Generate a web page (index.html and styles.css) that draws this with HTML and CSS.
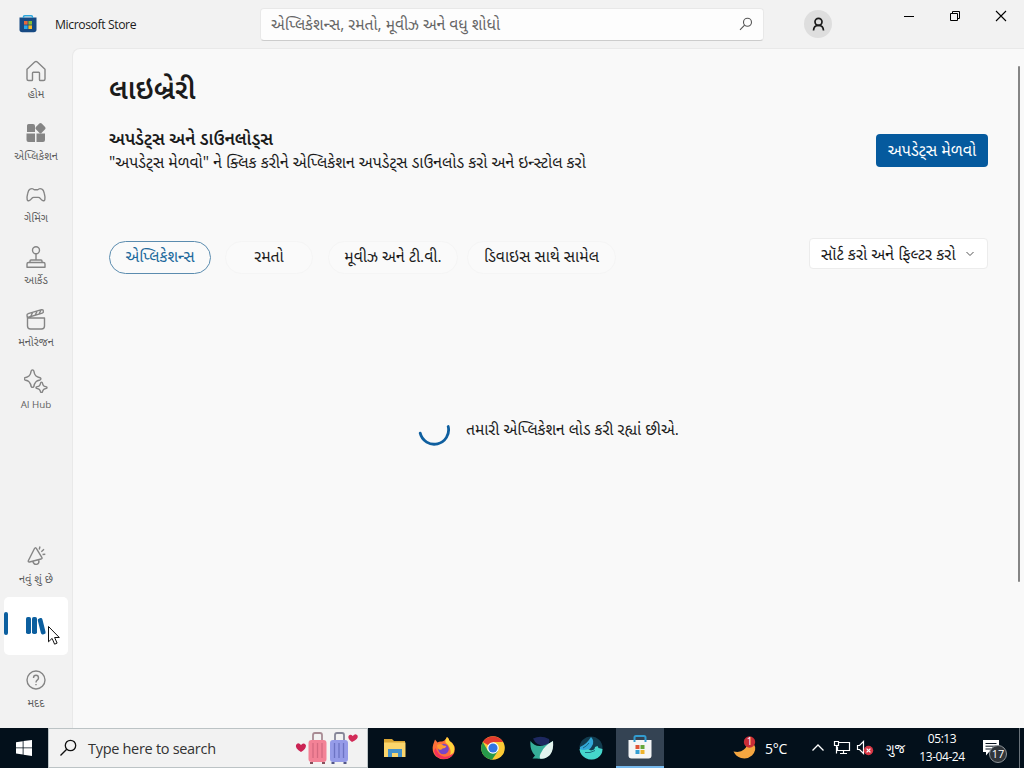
FILE: index.html
```
<!DOCTYPE html>
<html lang="gu">
<head>
    <meta charset="UTF-8">
    <meta name="viewport" content="width=device-width, initial-scale=1.0">
    <title>Microsoft Store</title>
    <link rel="stylesheet" href="styles.css">
</head>
<body>
    <header class="titlebar">
        <div class="brand">
            <svg width="18" height="18" viewBox="0 0 18 18">
                <path d="M.5 2.500h17v12q0 2.700-2.700 2.700H3.200q-2.700 0-2.700-2.700z" fill="#174a83"/>
                <path d="M4.500 3V2q0-1.200 1.200-1.200h6.600q1.200 0 1.200 1.200v1" fill="none" stroke="#2aa5dc" stroke-width="1.400"/>
                <path d="M5 6h3.600v3.600H5z" fill="#e66a3c"/>
                <path d="M9.400 6H13v3.600H9.400z" fill="#83bd35"/>
                <path d="M5 10.400h3.600V14H5z" fill="#28a8ea"/>
                <path d="M9.400 10.400H13V14H9.400z" fill="#f5bd28"/>
            </svg>
            <span>Microsoft Store</span>
        </div>
        <div class="search">
            <span>એપ્લિકેશન્સ, રમતો, મૂવીઝ અને વધુ શોધો</span>
            <svg width="14" height="14" viewBox="0 0 14 14" fill="none" stroke="#555" stroke-width="1.1">
                <circle cx="8.500" cy="5.300" r="4"/>
                <path d="M5.600 8.200L1 12.800"/>
            </svg>
        </div>
        <div class="avatar">
            <svg width="14" height="14" viewBox="0 0 14 14" fill="none" stroke="#1a1a1a" stroke-width="1.700">
                <circle cx="7.500" cy="4.800" r="3.500"/>
                <path d="M2.500 13.500q.2-5.200 5-5.200t5 5.200"/>
            </svg>
        </div>
        <div class="window-buttons">
            <svg width="12" height="12" viewBox="0 0 12 12"><path d="M1 6.500h10" stroke="#000"/></svg>
            <svg width="12" height="12" viewBox="0 0 12 12" fill="none" stroke="#000"><path d="M1.500 3.500h7v7h-7zM3.500 3.500v-2h7v7h-2"/></svg>
            <svg width="12" height="12" viewBox="0 0 12 12"><path d="M1 1l10 10M11 1L1 11" stroke="#000" stroke-width="1.100"/></svg>
        </div>
    </header>

    <div class="app">
        <nav class="sidebar">
            <a class="nav-item">
                <svg width="22" height="22" viewBox="0 0 22 22"><path d="M2 9.200L9.700 2q1.300-1.100 2.600 0L20 9.200V19q0 1.500-1.500 1.500h-3.200q-.8 0-.8-.8V13q0-.8-.8-.8H8.300q-.8 0-.8.8v6.700q0 .8-.8.8H3.500Q2 20.500 2 19z"/></svg>
                <span>હોમ</span>
            </a>
            <a class="nav-item">
                <svg class="solid" width="22" height="22" viewBox="0 0 22 22"><path d="M3.500 2H8q2 0 2 2v6H2V3.500Q2 2 3.500 2zM1.500 11.500H10V20H3.500q-2 0-2-2zM11.500 11.500H20V18q0 2-2 2h-6.500zM14.300 1.500q1.200-1 2.400 0l3.400 3.400q1 1.200 0 2.400l-3.400 3.400q-1.200 1-2.400 0l-3.400-3.400q-1-1.200 0-2.400z"/></svg>
                <span>એપ્લિકેશન</span>
            </a>
            <a class="nav-item">
                <svg width="22" height="22" viewBox="0 0 22 22"><path d="M5 5.200Q7 4.200 8.200 5q.5.800 1.200.8h3.200q.7 0 1.200-.8 1.200-.8 3.200.2 1.500.7 2.300 4.200 1.200 4.500.5 6.400-.4 1.200-1.600 1-1.500-.3-3-2.400-.7-1-2-1H8.800q-1.300 0-2 1-1.500 2.100-3 2.400-1.200.2-1.600-1-.7-1.900.5-6.400Q3.500 5.900 5 5.200z"/></svg>
                <span>ગેમિંગ</span>
            </a>
            <a class="nav-item">
                <svg width="22" height="22" viewBox="0 0 22 22"><circle cx="11" cy="4.200" r="3.500"/><path d="M11 7.700v6.800M5 16.500V15q0-1 1-1h10q1 0 1 1v1.500M3.500 16.500h15q1.500 0 1.500 1.500v3.300H2V18q0-1.500 1.500-1.500z"/></svg>
                <span>આર્કેડ</span>
            </a>
            <a class="nav-item">
                <svg width="22" height="22" viewBox="0 0 22 22"><path d="M2.500 10h17v8q0 3-3 3h-11q-3 0-3-3zM2.500 10L2 7.500q-.3-1.500 1.200-1.900L16.500 1.700q1.500-.3 1.800 1.200.4 1.800-1 2.200L2.500 9.500M7.500 4.700L5.500 8.800M12 3.400l-2 4.100M16 2l-2 4.100"/></svg>
                <span>મનોરંજન</span>
            </a>
            <a class="nav-item">
                <svg class="spark" width="24" height="24" viewBox="0 0 24 24"><path d="M7.200 1.800q1.300-1.800 2.600 0 .6 3.600 2 5 1.300 1.200 4.200 1.900 1.800 1 0 2.300-3 .6-4.200 1.900-1.400 1.400-2 4.600-1.300 1.800-2.600 0-.6-3.200-2-4.600Q4 11.600 1 11-.8 9.700 1 8.700q2.900-.7 4.200-1.900 1.400-1.400 2-5zM16.700 13.700q.8-1.200 1.600 0 .5 2.300 1.300 3.100.8.700 2.800 1.100 1.200.7 0 1.500-2 .4-2.800 1.200-.8.800-1.300 2.600-.8 1.200-1.600 0-.5-1.800-1.300-2.600-.8-.8-2.800-1.200-1.200-.8 0-1.500 2-.4 2.800-1.100.8-.8 1.300-3.100z"/></svg>
                <span class="latin">AI Hub</span>
            </a>
            <a class="nav-item nav-bottom">
                <svg width="22" height="22" viewBox="0 0 22 22"><path d="M9.500 3.500q.8-1.300 1.800-.1l5.500 9q.8 1.400-.8 1.600L4.500 17q-1.500.3-1.200-1.200zM8 16.800q.8 3 3.700 2.500 2.600-.7 2.200-3.800M14.200 4.500l.8-3M16.300 6.700l2.700-2.400M17.500 9.500l2.800-.3"/></svg>
                <span>નવું શું છે</span>
            </a>
            <a class="nav-item active">
                <svg width="24" height="24" viewBox="0 0 24 24"><rect x="2" y="3" width="5" height="17" rx="1.800"/><rect x="8" y="3" width="5" height="17" rx="1.800"/><rect x="15.300" y="4" width="4.800" height="16.500" rx="1.800" transform="rotate(-14 17.700 12.300)"/></svg>
            </a>
            <a class="nav-item">
                <svg width="22" height="22" viewBox="0 0 22 22"><circle cx="11" cy="11" r="9"/><path d="M8.500 9q0-2.700 2.500-2.700T13.500 9q0 1.200-1.300 2.200-1.200.8-1.200 2.200M11 15v1.300"/></svg>
                <span>મદદ</span>
            </a>
        </nav>

        <main class="content">
            <h1>લાઇબ્રેરી</h1>
            <section class="updates">
                <div>
                    <h2>અપડેટ્સ અને ડાઉનલોડ્સ</h2>
                    <p>"અપડેટ્સ મેળવો" ને ક્લિક કરીને એપ્લિકેશન અપડેટ્સ ડાઉનલોડ કરો અને ઇન્સ્ટોલ કરો</p>
                </div>
                <button class="primary">અપડેટ્સ મેળવો</button>
            </section>
            <section class="filters">
                <div class="chips">
                    <button class="chip chip-apps selected">એપ્લિકેશન્સ</button>
                    <button class="chip chip-games">રમતો</button>
                    <button class="chip chip-movies">મૂવીઝ અને ટી.વી.</button>
                    <button class="chip chip-device">ડિવાઇસ સાથે સામેલ</button>
                </div>
                <button class="sort">
                    <span>સૉર્ટ કરો અને ફિલ્ટર કરો</span>
                    <svg width="10" height="10" viewBox="0 0 10 10" fill="none" stroke="#555"><path d="M1.500 3L5 6.500 8.500 3"/></svg>
                </button>
            </section>
            <div class="loading">
                <svg width="34" height="34" viewBox="0 0 34 34" fill="none" stroke="#0f5f9f" stroke-width="2.800" stroke-linecap="round"><path d="M3.200 20.200A14.200 14.200 0 0 0 31.200 13.500"/></svg>
                <span>તમારી એપ્લિકેશન લોડ કરી રહ્યાં છીએ.</span>
            </div>
            <div class="scrollbar"></div>
        </main>
        <svg class="cursor" width="14" height="21" viewBox="0 0 14 21"><path d="M1.500 1.500v15.300l3.600-3.400 2.500 5.800 2.500-1.100-2.500-5.600h4.700z" fill="#fff" stroke="#111"/></svg>
    </div>

    <footer class="taskbar">
        <div class="start">
            <svg width="18" height="18" viewBox="0 0 18 18" fill="#fff"><path d="M1 3.200l6.700-1v6.300H1zM8.500 2.100L17 1v7.500H8.500zM1 9.300h6.700v6.300l-6.700-1zM8.500 9.300H17V17l-8.500-1.200z"/></svg>
        </div>
        <div class="task-search">
            <svg width="18" height="18" viewBox="0 0 18 18" fill="none" stroke="#111" stroke-width="1.300"><circle cx="10.500" cy="6.500" r="5.200"/><path d="M6.700 10.300L.5 16.500"/></svg>
            <span>Type here to search</span>
            <svg class="luggage" width="66" height="36" viewBox="0 0 66 36">
                <path d="M7 22q-6-3.500-5-7 2-3.500 5 0 3.500-3 5 .5 0 3.500-5 6.500z" fill="#cb2454"/>
                <path d="M19 11V5q0-2 2-2h5q2 0 2 2v6" fill="none" stroke="#a88b93" stroke-width="1.800"/>
                <rect x="14.500" y="10" width="18" height="22" rx="3" fill="#f38296"/>
                <path d="M19 13v15M23.500 13v15M28 13v15" stroke="#d46a80" stroke-width="1.300"/>
                <path d="M16 32h3v2h-3zM28 32h3v2h-3z" fill="#87505c"/>
                <path d="M41 11V5q0-2 2-2h5q2 0 2 2v6" fill="none" stroke="#858698" stroke-width="1.800"/>
                <rect x="36" y="10" width="18" height="22" rx="3" fill="#959be8"/>
                <path d="M40.500 13v15M45 13v15M49.500 13v15" stroke="#6d74c4" stroke-width="1.300"/>
                <path d="M37.500 32h3v2h-3zM49.500 32h3v2h-3z" fill="#535687"/>
                <path d="M58 12q-4.500-3-3.500-6 2-2.500 4.200 0 3-3.500 5-.3.800 3.300-5.700 6.300z" fill="#d22b58"/>
            </svg>
        </div>
        <div class="pinned">
            <div class="task-app">
                <svg width="24" height="24" viewBox="0 0 24 24"><path d="M1 3h8l2 2h11v16H1z" fill="#d9a534"/><path d="M1 6.500h21.500V21H1z" fill="#fbd56b"/><path d="M5 13h14v8h-4v-4H9v4H5z" fill="#4591c9"/></svg>
            </div>
            <div class="task-app">
                <svg width="24" height="24" viewBox="0 0 24 24"><path d="M15 1q2 1.500 2.500 4 3 1.200 5 5.500 1.500 8-5.200 11.500Q10 25.300 4 20.500-.7 16 1.200 8.500L3 3.500l2.500 3q2-1.500 4.500-1Q13 5 15 1z" fill="#ff7139"/><path d="M15 1q2 1.500 2.500 4 5 3 4.800 8.500-.5 5-4.800 7.500 2-4 .5-8.500-1-3.500-4.500-6Q13 3.500 15 1z" fill="#ffd43b"/><path d="M2 15q2 8 10 8 7 0 9.500-6-5 4.500-10 3.500T3.500 12z" fill="#f5315c"/><circle cx="11.500" cy="13" r="5.300" fill="#7a45c7"/><path d="M5 9q4-2 6.500.5l3 .5q-1 2.500-4 2.500-1.500 2-3.700.7Q5 12 5 9z" fill="#ff9a32"/></svg>
            </div>
            <div class="task-app">
                <svg width="24" height="24" viewBox="0 0 24 24"><circle cx="12" cy="12" r="11.800" fill="#fcc934"/><path d="M12 12L1.800 6A11.800 11.800 0 0 1 22.200 6H12z" fill="#e33b2e"/><path d="M1.800 6A11.800 11.800 0 0 0 11 23.800L17 15 12 12 7 15z" fill="#27994a"/><circle cx="12" cy="12" r="5.800" fill="#fff"/><circle cx="12" cy="12" r="4.600" fill="#3275e4"/></svg>
            </div>
            <div class="task-app">
                <svg width="24" height="24" viewBox="0 0 24 24"><path d="M3 2.500Q11-1 19 3q1.500 4-3 7Q6 10 3 2.500z" fill="#1d2860"/><path d="M.5 5q3.500 5 9 5 6 0 13.500-5 .5 9-4 14-5 5-12 3.500H2.500L5 19.500Q-.5 14 .5 5z" fill="#36ad98"/><path d="M23 5q1 9-3 14-4.500 4.500-10 3.500-1-3 1.500-6.500Q14 10 23 5z" fill="#e4f4ef"/></svg>
            </div>
            <div class="task-app">
                <svg width="24" height="24" viewBox="0 0 24 24"><circle cx="12" cy="12" r="11.500" fill="#123c4f"/><path d="M1 11Q8 8 12 1q4 4 1 9-2 4-5 4l-3 1-4-1z" fill="#32a8d8"/><path d="M.5 13q4.500 2 8.500 0l3 1.500q4-.5 4-3.500l2.500-1 1 2 4 1q0 6-5 9-6 3-12 0Q1 19 .5 13z" fill="#45d6cc"/><path d="M4 12q4-2 6-5M6 16.500q5 1 10-2" fill="none" stroke="#10546b" stroke-width=".8"/></svg>
            </div>
            <div class="task-app open">
                <svg width="24" height="24" viewBox="0 0 24 24"><path d="M.5 5h23v15.500q0 3-3 3h-17q-3 0-3-3z" fill="#f4f5f6"/><path d="M6.500 7V2.500Q6.500 1 8 1h8q1.500 0 1.500 1.500V7" fill="none" stroke="#329ccf" stroke-width="2"/><path d="M7.500 10h4v4h-4z" fill="#df5336"/><path d="M12.500 10h4v4h-4z" fill="#65a63a"/><path d="M7.500 15h4v4h-4z" fill="#359ed2"/><path d="M12.500 15h4v4h-4z" fill="#eeb32c"/></svg>
            </div>
        </div>
        <div class="tray">
            <div class="weather">
                <svg width="26" height="26" viewBox="0 0 26 26"><path d="M20.500 8.500q4 6-1.500 12-4.500 4-11 2.500Q3 21.500.5 16.500q7 1.500 10.500-2 3.500-3 3-6z" fill="#f5a640"/><circle cx="16.500" cy="7" r="5.700" fill="#c92d36"/></svg>
                <span class="weather-count">1</span>
                <span>5°C</span>
            </div>
            <svg class="chevron" width="14" height="14" viewBox="0 0 14 14" fill="none" stroke="#fff" stroke-width="1.300"><path d="M1.500 9.500L7 4l5.500 5.500"/></svg>
            <svg class="network" width="18" height="16" viewBox="0 0 18 16" fill="none" stroke="#fff" stroke-width="1.200"><path d="M6 2.500h10.500v8H4.500v-4M1.500 1.500h4v4h-4zM3.500 5.500v8M7 13.500h7M10.500 10.500v3"/></svg>
            <svg class="volume" width="18" height="16" viewBox="0 0 18 16"><path d="M1.500 5.500h2l4-4v12l-4-4h-2z" fill="none" stroke="#fff" stroke-width="1.200"/><circle cx="12.500" cy="10.500" r="4.700" fill="#d83745"/><path d="M10.600 8.600l3.800 3.800M14.400 8.600l-3.800 3.800" stroke="#fff" stroke-width="1.200"/></svg>
            <span class="language">ગુજ</span>
            <div class="clock"><span>05:13</span><span>13-04-24</span></div>
            <div class="notifications">
                <svg width="18" height="18" viewBox="0 0 18 18"><path d="M1 1h16v12H7l-3 3.500V13H1z" fill="#fff"/><path d="M3.500 4.500h11M3.500 7.200h11M3.500 10h7" stroke="#08131f"/></svg>
                <span class="count">17</span>
            </div>
            <div class="show-desktop"></div>
        </div>
    </footer>
</body>
</html>
```
FILE: styles.css
```
* {
    box-sizing: border-box;
}
body {
    font-family: "Open Sans", "Noto Sans Gujarati", "Noto Sans", sans-serif;
    color: #1b1b1b;
    background: #f2f2f2;
    margin: 0;
    height: 100vh;
    display: flex;
    flex-direction: column;
    overflow: hidden;
    white-space: nowrap;
}
svg {
    display: block;
    flex-shrink: 0;
}
h1, h2, p {
    margin: 0;
}
button {
    font: inherit;
    padding: 0;
    color: inherit;
}
.titlebar {
    height: 48px;
    display: flex;
    align-items: center;
    flex-shrink: 0;
}
.brand {
    width: 260px;
    display: flex;
    align-items: center;
    gap: 18px;
    padding-left: 19px;
    font-size: 12.2px;
    letter-spacing: -0.4px;
}
.search {
    width: 504px;
    height: 33px;
    display: flex;
    align-items: center;
    justify-content: space-between;
    padding: 0 10px;
    background: #fdfdfd;
    border: 1px solid #e8e8e8;
    border-bottom-color: #ccc;
    border-radius: 4px;
    color: #666;
    font-size: 15.6px;
}
.avatar {
    width: 28px;
    height: 28px;
    margin-left: 40px;
    border-radius: 50%;
    background: #dedede;
    display: grid;
    place-items: center;
}
.window-buttons {
    display: flex;
    gap: 34px;
    margin-left: 71px;
    margin-bottom: 16px;
}
.app {
    flex: 1;
    display: flex;
    position: relative;
}
.sidebar {
    width: 72px;
    padding: 2px 4px 11px;
    display: flex;
    flex-direction: column;
    gap: 4px;
}
.nav-item {
    height: 58px;
    display: flex;
    flex-direction: column;
    align-items: center;
    padding-top: 10px;
    color: #5f5f5f;
    font-size: 11.1px;
    line-height: 14px;
}
.nav-item svg {
    fill: none;
    stroke: #858585;
    stroke-width: 1.4;
    stroke-linejoin: round;
}
.nav-item .solid {
    fill: #858585;
    stroke: none;
}
.nav-item span {
    margin-top: 5px;
}
.nav-item .latin {
    margin-top: 6px;
    font-size: 9.8px;
}
.nav-item .spark {
    margin-top: -1px;
    margin-bottom: -1px;
}
.nav-bottom {
    margin-top: auto;
}
.nav-item.active {
    background: #fff;
    border-radius: 5px;
    justify-content: center;
    padding: 0 0 1px;
    position: relative;
}
.nav-item.active svg {
    fill: #0c5f9f;
    stroke: none;
}
.active::before {
    content: "";
    position: absolute;
    left: 0;
    top: 15px;
    width: 4px;
    height: 23px;
    border-radius: 2px;
    background: #0c5f9f;
}
.content {
    flex: 1;
    position: relative;
    padding: 0 36px;
    background: #f9f9f9;
    border: 1px solid #e9e9e9;
    border-width: 1px 0 0 1px;
    border-top-left-radius: 8px;
}
h1 {
    height: 78px;
    padding-top: 22px;
    font-size: 27.5px;
    font-weight: 600;
    line-height: 35px;
}
.updates {
    display: flex;
    justify-content: space-between;
    height: 111px;
}
h2 {
    font-size: 17.3px;
    font-weight: 600;
    line-height: 23px;
}
.updates p {
    font-size: 15.8px;
    line-height: 25px;
}
.primary {
    width: 112px;
    height: 33px;
    margin-top: 7px;
    padding-top: 1px;
    color: #fff;
    background: #055a9e;
    border: 0;
    border-radius: 4px;
    font-size: 16px;
}
.filters {
    display: flex;
    justify-content: space-between;
    height: 126px;
}
.chips {
    display: flex;
    padding-top: 3px;
}
.chip {
    height: 33px;
    padding-bottom: 2px;
    border: 1px solid #f5f5f5;
    border-radius: 17px;
    background: #fafafa;
    font-size: 15.8px;
}
.chip-apps {
    width: 102px;
}
.chip-games {
    width: 88px;
    margin-left: 14px;
}
.chip-movies {
    width: 130px;
    margin-left: 15px;
}
.chip-device {
    width: 149px;
    margin-left: 9px;
}
.chip.selected {
    color: #20689b;
    border-color: #5b8caf;
    font-size: 15.6px;
}
.sort {
    width: 179px;
    height: 31px;
    display: flex;
    align-items: center;
    justify-content: space-between;
    padding: 1px 12px 0 11px;
    background: #fff;
    border: 1px solid #ececec;
    border-radius: 4px;
    font-size: 15.9px;
}
.loading {
    display: flex;
    align-items: flex-start;
    gap: 15px;
    margin-left: 308px;
    padding-top: 49px;
    font-size: 15.6px;
    line-height: 33px;
}
.scrollbar {
    position: absolute;
    right: 4px;
    top: 17px;
    width: 2px;
    height: 516px;
    border-radius: 1px;
    background: #858585;
}
.cursor {
    position: absolute;
    left: 47px;
    top: 577px;
}
.taskbar {
    height: 40px;
    display: flex;
    flex-shrink: 0;
    background: #03101b;
    color: #fff;
}
.start {
    width: 48px;
    display: grid;
    place-items: center;
}
.task-search {
    width: 320px;
    display: flex;
    align-items: center;
    padding-left: 11px;
    background: #f2f2f2;
    border: 1px solid #bcc3c5;
    color: #333;
    font-size: 14.5px;
    letter-spacing: -0.3px;
}
.task-search span {
    margin-left: 10px;
}
.luggage {
    margin: 0 7px 0 auto;
}
.pinned {
    display: flex;
    margin-left: 3px;
}
.task-app {
    width: 49px;
    display: grid;
    place-items: center;
    padding-right: 1px;
}
.task-app.open {
    width: 48px;
    background: #344353;
    border-bottom: 2px solid #76b9ed;
}
.tray {
    display: flex;
    align-items: center;
    margin-left: auto;
}
.weather {
    display: flex;
    align-items: center;
    gap: 6px;
    position: relative;
    font-size: 14px;
    letter-spacing: -0.3px;
}
.weather-count {
    position: absolute;
    left: 13px;
    top: -1px;
    width: 7px;
    font-size: 10px;
    text-align: center;
}
.chevron {
    margin-left: 24px;
}
.network {
    margin-left: 8px;
}
.volume {
    margin-left: 5px;
}
.language {
    width: 20px;
    margin-left: 12px;
    font-size: 13px;
}
.clock {
    width: 50px;
    margin-left: 11px;
    display: flex;
    flex-direction: column;
    align-items: center;
    font-size: 12px;
    line-height: 18px;
    letter-spacing: -0.45px;
}
.notifications {
    position: relative;
    margin-left: 15px;
}
.count {
    position: absolute;
    left: 7px;
    top: 6px;
    width: 18px;
    height: 18px;
    border: 1px solid #8d9398;
    border-radius: 50%;
    background: #30353a;
    font-size: 11px;
    line-height: 16px;
    text-align: center;
}
.show-desktop {
    width: 5px;
    height: 40px;
    margin-left: 19px;
    border-left: 1px solid #69727a;
}
```
